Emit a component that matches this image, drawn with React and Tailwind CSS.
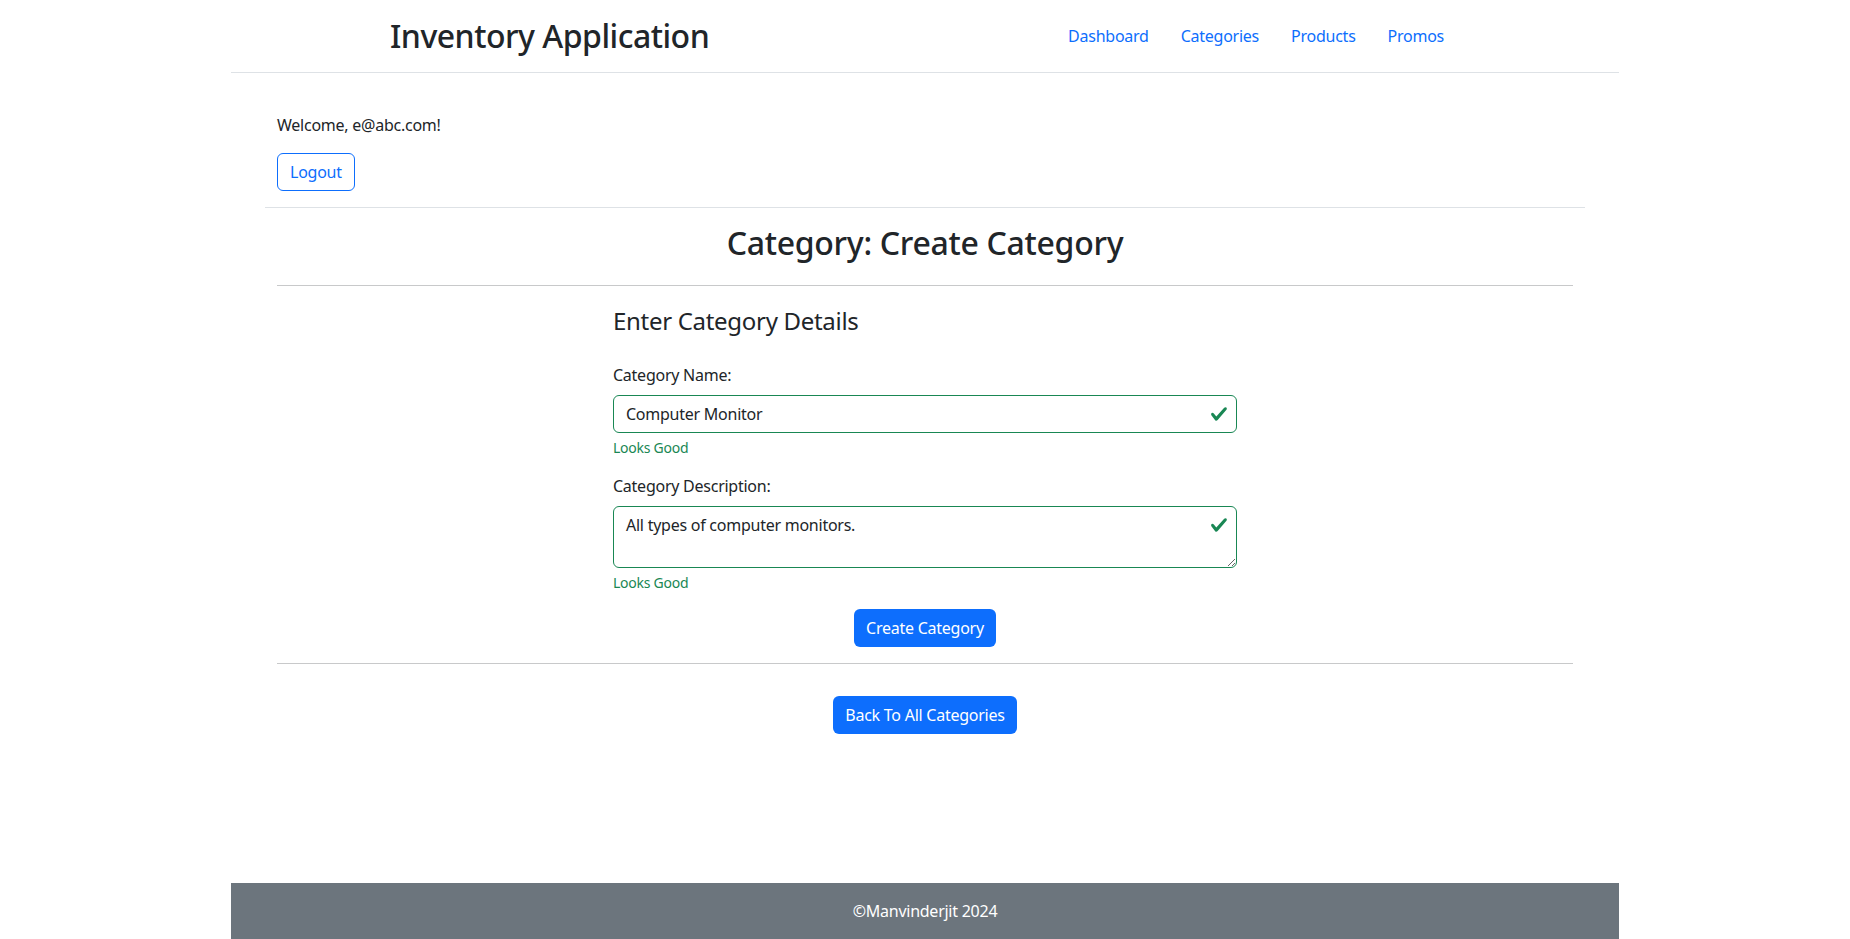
import React from "react";

const Check = ({ className }) => (
  <svg viewBox="0 0 8 8" className={className} aria-hidden="true">
    <path
      fill="#198754"
      d="M2.3 6.73.6 4.53c-.4-1.04.46-1.4 1.1-.8l1.1 1.4 3.4-3.8c.6-.63 1.6-.27 1.2.7l-4 4.6c-.43.5-.8.4-1.1.1z"
    />
  </svg>
);

export default function App() {
  return (
    <div
      className="min-h-screen flex flex-col bg-white text-[#212529] text-[16px] leading-[1.5] tracking-[-0.25px]"
      style={{ fontFamily: '"Noto Sans", "Open Sans", sans-serif' }}
    >
      <header className="w-[1388px] mx-auto border-b border-[#dee2e6] h-[73px] flex items-center justify-between pl-[159px] pr-[159px]">
        <div className="text-[32px] font-medium leading-[1.2] tracking-[-0.5px]">Inventory Application</div>
        <nav className="flex">
          {["Dashboard", "Categories", "Products", "Promos"].map((l) => (
            <a key={l} href="#" className="px-4 py-2 text-[#0d6efd]">
              {l}
            </a>
          ))}
        </nav>
      </header>

      <main className="w-[1320px] mx-auto">
        <div className="px-3 pt-[40px] pb-4">
          <p className="mb-4">Welcome, e@abc.com!</p>
          <button className="h-[38px] px-3 border border-[#0d6efd] text-[#0d6efd] rounded-[6px]">
            Logout
          </button>
        </div>
        <div className="border-t border-[#dee2e6] px-3">
          <h2 className="text-center text-[32px] font-medium leading-[1.2] tracking-[-0.3px] pt-[16px] pb-[23px]">
            Category: Create Category
          </h2>
          <hr className="border-t border-[#c8c9ca]" />
          <form className="w-[624px] ml-[336px] pt-[17px]" onSubmit={(e) => e.preventDefault()}>
            <div className="text-[24px] leading-[1.5] tracking-[-0.3px] mb-[24px]">Enter Category Details</div>
            <div className="mb-4">
              <label className="block mb-2">Category Name:</label>
              <div className="relative">
                <input
                  type="text"
                  defaultValue="Computer Monitor"
                  className="w-full h-[38px] border border-[#198754] rounded-[6px] pl-3 pr-9 outline-none"
                />
                <Check className="absolute right-[9px] top-[10px] w-[18px] h-[18px]" />
              </div>
              <div className="text-[14px] text-[#198754] mt-1">Looks Good</div>
            </div>
            <div className="mb-4">
              <label className="block mb-2">Category Description:</label>
              <div className="relative">
                <textarea
                  rows={2}
                  defaultValue="All types of computer monitors."
                  className="block w-full h-[62px] border border-[#198754] rounded-[6px] pl-3 pr-9 py-[6px] outline-none resize-y"
                />
                <Check className="absolute right-[9px] top-[10px] w-[18px] h-[18px]" />
              </div>
              <div className="text-[14px] text-[#198754] mt-1">Looks Good</div>
            </div>
            <div className="flex justify-center mb-4">
              <button className="h-[38px] px-3 bg-[#0d6efd] text-white rounded-[6px]">
                Create Category
              </button>
            </div>
          </form>
          <hr className="border-t border-[#c8c9ca]" />
          <div className="flex justify-center pt-8">
            <button className="h-[38px] px-3 bg-[#0d6efd] text-white rounded-[6px]">
              Back To All Categories
            </button>
          </div>
        </div>
      </main>

      <footer className="mt-auto w-[1388px] mx-auto bg-[#6c757d] text-white text-center py-4">
        ©Manvinderjit 2024
      </footer>
    </div>
  );
}
